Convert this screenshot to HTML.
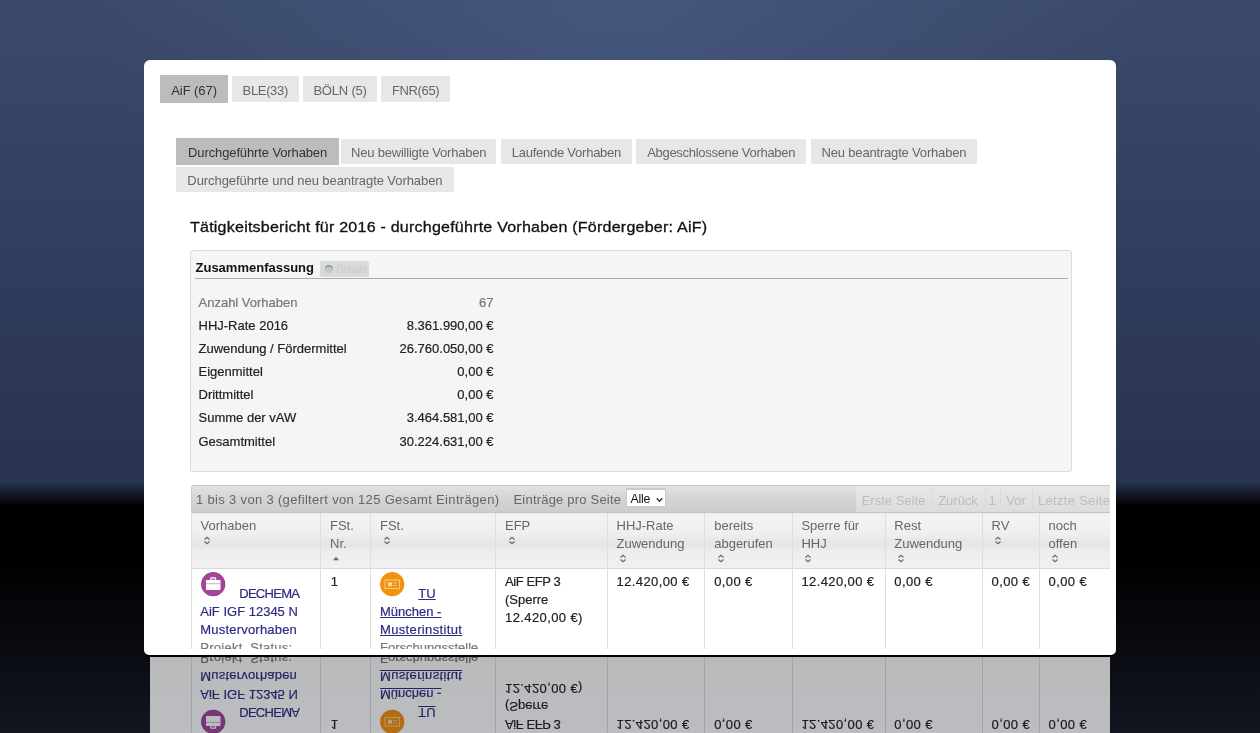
<!DOCTYPE html>
<html><head><meta charset="utf-8"><title>Tätigkeitsbericht</title>
<style>
*{box-sizing:border-box;margin:0;padding:0}
html,body{width:1260px;height:733px;overflow:hidden}
body{position:relative;font-family:"Liberation Sans",sans-serif;font-size:13px;color:#222;background:#000}
.bgtop{position:absolute;left:0;top:0;width:1260px;height:506px;
 background:linear-gradient(to bottom,#3b4a6c 0px,#2f3b5a 300px,#283350 482px,#000 506px)}
.bgglow{position:absolute;left:0;top:0;width:1260px;height:482px;
 background:radial-gradient(ellipse 520px 300px at 620px 10px,rgba(78,98,138,0.55),rgba(78,98,138,0) 100%)}
.bgbot{position:absolute;left:0;top:506px;width:1260px;height:227px;
 background:linear-gradient(to bottom,#000 0px,#010102 60px,#121620 227px)}
.card{position:absolute;left:144px;top:60px;width:972px;height:595px;background:#fff;border-radius:6px 6px 5px 5px;box-shadow:0 2px 0 #000}
.inner{position:absolute;left:150px;top:66px;width:960px;height:583px;overflow:hidden;background:#fff;will-change:transform}
.a{position:absolute;white-space:nowrap}
.tab{position:absolute;height:26px;background:#e7e7e7;color:#666;text-align:center;line-height:26px;padding-top:2px}
.tab.act{background:#bcbcbc;color:#333}
.title{position:absolute;left:39.5px;top:150.7px;font-size:15px;letter-spacing:0.2px;color:#111;line-height:20px;-webkit-text-stroke:0.3px #111;transform:scaleX(1.07);transform-origin:0 0}
.sum{position:absolute;left:39.5px;top:184px;width:882px;height:221.5px;background:#f5f5f5;border:1px solid #dcdcdc;border-radius:3px}
.sumhd{position:absolute;left:5px;top:9px;font-weight:bold;color:#111;line-height:16px}
.det{position:absolute;left:129.5px;top:9.6px;width:48.5px;height:16.7px;background:linear-gradient(#d9dcdc,#d6d9d8);border-radius:2px;color:#c9cccb;font-size:10px;line-height:17px;padding-left:16px}
.det:before{content:"";position:absolute;left:5px;top:4.5px;width:8px;height:8px;border-radius:4px;background:#c4c8c8;box-shadow:inset 0 2px 0 #9a9d9d}
.sumline{position:absolute;left:4px;top:26.5px;width:873px;height:1px;background:#acacac}
.row{position:absolute;left:8px;width:295px;line-height:18px;-webkit-text-stroke:0.2px currentColor}
.row .v{position:absolute;right:0;top:0}
.tb{position:absolute;left:41px;top:419px;width:930px;height:28px;border:1px solid #cacaca;border-bottom-color:#c2c2c2;border-radius:3px 3px 0 0;background:linear-gradient(#e3e3e3,#d6d6d6 40%,#cdcdcd);color:#666}
.hd{position:absolute;left:41px;top:446.5px;width:930px;height:56px;background:linear-gradient(#eeeeee 0,#f3f3f3 11%,#eeeeee 40%,#e7e7e7 50%,#e7e7e7 60%,#eeeeee 70%,#f0f0f0 100%);border-bottom:1px solid #dadada}
.col{position:absolute;top:0;height:100%;width:1px;background:#dedede}
.ht{position:absolute;color:#666;line-height:18px}
.bd{position:absolute;left:41px;top:502px;width:930px;height:90px}
.bt{position:absolute;line-height:17.9px;-webkit-text-stroke:0.2px currentColor}
.lnk{color:#2c2c82}
.u{text-decoration:underline}
.g{color:#777}
.sort{position:absolute;width:8px;height:9px}
.refl{position:absolute;left:150px;top:657px;width:960px;height:81px;overflow:hidden;transform:scaleY(-1);opacity:0.72;background:#fff;will-change:transform}
.sel{background:#fff;border:1px solid #c9c9c9;border-radius:1px;color:#111;line-height:16px;padding-left:3px;font-size:12.5px}
.pg{position:absolute;top:1.5px;height:23.5px;color:#bdbdbd;text-align:center;line-height:22px;padding-top:2px}
.pgw{position:absolute;left:664px;top:1px;width:280px;height:25px;background:linear-gradient(#e6e6e6,#dcdcdc)}
.sep{position:absolute;top:2px;width:1px;height:22px;background:#dadada}
</style></head><body>
<div class="bgtop"></div><div class="bgglow"></div><div class="bgbot"></div>
<div class="card"></div>
<div class="inner">
 <div class="tab act" style="left:10px;top:9.3px;width:68.2px;height:27.8px;line-height:28px;letter-spacing:-0.05px">AiF (67)</div>
 <div class="tab" style="left:81.7px;top:10.3px;width:67.1px;height:25.6px;letter-spacing:-0.34px">BLE(33)</div>
 <div class="tab" style="left:153.3px;top:10.3px;width:73.5px;height:25.6px;letter-spacing:-0.2px">BÖLN (5)</div>
 <div class="tab" style="left:231.2px;top:10.3px;width:68.9px;height:25.6px;letter-spacing:-0.35px">FNR(65)</div>
 <div class="tab act" style="left:26.2px;top:72.1px;height:26.8px;width:162.8px;letter-spacing:-0.12px">Durchgeführte Vorhaben</div>
 <div class="tab" style="left:191.4px;top:73.1px;height:24.8px;padding-top:1.2px;width:154.6px;letter-spacing:-0.22px">Neu bewilligte Vorhaben</div>
 <div class="tab" style="left:351.1px;top:73.1px;height:24.8px;padding-top:1.2px;width:130.6px;letter-spacing:-0.24px">Laufende Vorhaben</div>
 <div class="tab" style="left:486px;top:73.1px;height:24.8px;padding-top:1.2px;width:170.3px;letter-spacing:-0.29px">Abgeschlossene Vorhaben</div>
 <div class="tab" style="left:660.6px;top:73.1px;height:24.8px;padding-top:1.2px;width:166.7px;letter-spacing:-0.18px">Neu beantragte Vorhaben</div>
 <div class="tab" style="left:26px;top:100.8px;height:25.3px;padding-top:1.4px;width:277.8px;letter-spacing:-0.07px">Durchgeführte und neu beantragte Vorhaben</div>

 <div class="title">Tätigkeitsbericht für 2016 - durchgeführte Vorhaben (Fördergeber: AiF)</div>

 <div class="sum">
  <div class="sumhd">Zusammenfassung</div>
  <div class="det">Details</div>
  <div class="sumline"></div>
  <div class="row g" style="top:42.5px">Anzahl Vorhaben<span class="v">67</span></div>
  <div class="row" style="top:65.7px">HHJ-Rate 2016<span class="v">8.361.990,00 €</span></div>
  <div class="row" style="top:88.9px">Zuwendung / Fördermittel<span class="v">26.760.050,00 €</span></div>
  <div class="row" style="top:112px">Eigenmittel<span class="v">0,00 €</span></div>
  <div class="row" style="top:135.2px">Drittmittel<span class="v">0,00 €</span></div>
  <div class="row" style="top:158.4px">Summe der vAW<span class="v">3.464.581,00 €</span></div>
  <div class="row" style="top:181.6px">Gesamtmittel<span class="v">30.224.631,00 €</span></div>
 </div>

 <div class="tb"><span class="a" style="left:4px;top:5px;line-height:18px;letter-spacing:0.33px">1 bis 3 von 3 (gefiltert von 125 Gesamt Einträgen)</span><span class="a" style="left:321.5px;top:5px;line-height:18px;letter-spacing:0.2px">Einträge pro Seite</span><div class="a sel" style="left:433.5px;top:2.2px;width:40.5px;height:19.2px;line-height:19px;border-top-width:2px;font-size:12.3px;letter-spacing:-0.2px;padding-left:4px">Alle<svg style="position:absolute;left:29px;top:7px" width="7" height="6" viewBox="0 0 7 6"><path d="M0.7 1.2 L3.5 4.2 L6.3 1.2" fill="none" stroke="#333" stroke-width="1.3"/></svg></div><div class="pgw"></div><div class="pg" style="left:664px;width:75px"><span>Erste Seite</span></div><div class="sep" style="left:739px"></div><div class="pg" style="left:739px;width:54px"><span>Zurück</span></div><div class="sep" style="left:793px"></div><div class="pg" style="left:793px;width:14px"><span>1</span></div><div class="sep" style="left:808px"></div><div class="pg" style="left:808px;width:32px"><span>Vor</span></div><div class="sep" style="left:840px"></div><div class="pg" style="left:842px;width:90px;text-align:left;padding-left:4px;letter-spacing:0.3px"><span>Letzte Seite</span></div></div>
 <div class="hd"><div class="col" style="left:0px"></div><div class="col" style="left:129px"></div><div class="col" style="left:179px"></div><div class="col" style="left:304px"></div><div class="col" style="left:416px"></div><div class="col" style="left:513px"></div><div class="col" style="left:601px"></div><div class="col" style="left:694px"></div><div class="col" style="left:791px"></div><div class="col" style="left:848px"></div><div class="ht" style="left:9.5px;top:4.50px">Vorhaben</div><svg class="sort" style="left:12.4px;top:23.5px" width="8" height="9" viewBox="0 0 8 9"><path d="M1.5 3.5 L4 1.2 L6.5 3.5 M1.5 5.5 L4 7.8 L6.5 5.5" fill="none" stroke="#6a6a6a" stroke-width="1.2"/></svg><div class="ht" style="left:139.0px;top:4.50px">FSt.<br>Nr.</div><svg class="sort" style="left:140.8px;top:41.3px" width="8" height="9" viewBox="0 0 8 9"><path d="M1 6.2 L4 2.8 L7 6.2 Z" fill="#666"/></svg><div class="ht" style="left:189.0px;top:4.50px">FSt.</div><svg class="sort" style="left:191.9px;top:23.5px" width="8" height="9" viewBox="0 0 8 9"><path d="M1.5 3.5 L4 1.2 L6.5 3.5 M1.5 5.5 L4 7.8 L6.5 5.5" fill="none" stroke="#6a6a6a" stroke-width="1.2"/></svg><div class="ht" style="left:314.0px;top:4.50px">EFP</div><svg class="sort" style="left:316.9px;top:23.5px" width="8" height="9" viewBox="0 0 8 9"><path d="M1.5 3.5 L4 1.2 L6.5 3.5 M1.5 5.5 L4 7.8 L6.5 5.5" fill="none" stroke="#6a6a6a" stroke-width="1.2"/></svg><div class="ht" style="left:425.5px;top:4.50px">HHJ-Rate<br>Zuwendung</div><svg class="sort" style="left:428.4px;top:41.5px" width="8" height="9" viewBox="0 0 8 9"><path d="M1.5 3.5 L4 1.2 L6.5 3.5 M1.5 5.5 L4 7.8 L6.5 5.5" fill="none" stroke="#6a6a6a" stroke-width="1.2"/></svg><div class="ht" style="left:523.2px;top:4.50px">bereits<br>abgerufen</div><svg class="sort" style="left:526.1px;top:41.5px" width="8" height="9" viewBox="0 0 8 9"><path d="M1.5 3.5 L4 1.2 L6.5 3.5 M1.5 5.5 L4 7.8 L6.5 5.5" fill="none" stroke="#6a6a6a" stroke-width="1.2"/></svg><div class="ht" style="left:610.4px;top:4.50px">Sperre für<br>HHJ</div><svg class="sort" style="left:613.3px;top:41.5px" width="8" height="9" viewBox="0 0 8 9"><path d="M1.5 3.5 L4 1.2 L6.5 3.5 M1.5 5.5 L4 7.8 L6.5 5.5" fill="none" stroke="#6a6a6a" stroke-width="1.2"/></svg><div class="ht" style="left:703.3px;top:4.50px">Rest<br>Zuwendung</div><svg class="sort" style="left:706.2px;top:41.5px" width="8" height="9" viewBox="0 0 8 9"><path d="M1.5 3.5 L4 1.2 L6.5 3.5 M1.5 5.5 L4 7.8 L6.5 5.5" fill="none" stroke="#6a6a6a" stroke-width="1.2"/></svg><div class="ht" style="left:800.5px;top:4.50px">RV</div><svg class="sort" style="left:803.4px;top:23.5px" width="8" height="9" viewBox="0 0 8 9"><path d="M1.5 3.5 L4 1.2 L6.5 3.5 M1.5 5.5 L4 7.8 L6.5 5.5" fill="none" stroke="#6a6a6a" stroke-width="1.2"/></svg><div class="ht" style="left:857.5px;top:4.50px">noch<br>offen</div><svg class="sort" style="left:860.4px;top:41.5px" width="8" height="9" viewBox="0 0 8 9"><path d="M1.5 3.5 L4 1.2 L6.5 3.5 M1.5 5.5 L4 7.8 L6.5 5.5" fill="none" stroke="#6a6a6a" stroke-width="1.2"/></svg></div>
 <div class="bd"><div class="col" style="left:0px"></div><div class="col" style="left:129px"></div><div class="col" style="left:179px"></div><div class="col" style="left:304px"></div><div class="col" style="left:416px"></div><div class="col" style="left:513px"></div><div class="col" style="left:601px"></div><div class="col" style="left:694px"></div><div class="col" style="left:791px"></div><div class="col" style="left:848px"></div><svg class="a" style="left:9.6px;top:4.2px" width="25" height="25" viewBox="0 0 25 25"><circle cx="12.2" cy="12.2" r="12.1" fill="#9c3f95"/><circle cx="12.2" cy="12.2" r="11.2" fill="#a2469b"/><rect x="5" y="7.9" width="14.5" height="10.2" rx="0.8" fill="#fff"/><rect x="9.7" y="5.9" width="5" height="2.3" rx="0.8" fill="none" stroke="#fff" stroke-width="1.1"/><line x1="5" y1="11.7" x2="19.5" y2="11.7" stroke="#c9a6c6" stroke-width="0.9"/></svg><div class="a bt lnk" style="left:48.20px;top:17.24px;letter-spacing:-0.7px">DECHEMA</div><div class="a bt lnk" style="left:9.30px;top:34.94px;">AiF IGF 12345 N</div><div class="a bt lnk" style="left:9.30px;top:52.64px;letter-spacing:0.2px">Mustervorhaben</div><div class="a bt g" style="left:9.30px;top:70.54px;letter-spacing:0.25px">Projekt&nbsp; Status:</div><div class="a bt " style="left:139.70px;top:5.44px;">1</div><svg class="a" style="left:189.1px;top:4.2px" width="25" height="25" viewBox="0 0 25 25"><circle cx="12.2" cy="12.2" r="12.1" fill="#f39112"/><rect x="5" y="8" width="14.5" height="8.5" fill="none" stroke="#fbc77a" stroke-width="1.1"/><rect x="8" y="10.3" width="4" height="4" fill="#fdd9a0"/><line x1="13" y1="11" x2="17" y2="11" stroke="#fbc77a" stroke-width="0.9"/><line x1="13" y1="13.5" x2="17" y2="13.5" stroke="#fbc77a" stroke-width="0.9"/></svg><div class="a bt lnk u" style="left:227.30px;top:16.74px;">TU</div><div class="a bt lnk u" style="left:189.00px;top:34.94px;">München -</div><div class="a bt lnk u" style="left:189.00px;top:52.64px;letter-spacing:0.35px">Musterinstitut</div><div class="a bt g" style="left:189.00px;top:70.54px;">Forschungsstelle</div><div class="a bt " style="left:314.00px;top:5.04px;letter-spacing:-0.4px">AiF EFP 3</div><div class="a bt " style="left:314.00px;top:22.94px;">(Sperre</div><div class="a bt " style="left:314.00px;top:40.84px;letter-spacing:0.4px">12.420,00 €)</div><div class="a bt " style="left:425.50px;top:5.04px;letter-spacing:0.4px">12.420,00 €</div><div class="a bt " style="left:523.20px;top:5.04px;letter-spacing:0.4px">0,00 €</div><div class="a bt " style="left:610.40px;top:5.04px;letter-spacing:0.4px">12.420,00 €</div><div class="a bt " style="left:703.30px;top:5.04px;letter-spacing:0.4px">0,00 €</div><div class="a bt " style="left:800.50px;top:5.04px;letter-spacing:0.4px">0,00 €</div><div class="a bt " style="left:857.50px;top:5.04px;letter-spacing:0.4px">0,00 €</div></div>
</div>
<div class="refl"><div class="bd" style="top:0px"><div class="col" style="left:0px"></div><div class="col" style="left:129px"></div><div class="col" style="left:179px"></div><div class="col" style="left:304px"></div><div class="col" style="left:416px"></div><div class="col" style="left:513px"></div><div class="col" style="left:601px"></div><div class="col" style="left:694px"></div><div class="col" style="left:791px"></div><div class="col" style="left:848px"></div><svg class="a" style="left:9.6px;top:4.2px" width="25" height="25" viewBox="0 0 25 25"><circle cx="12.2" cy="12.2" r="12.1" fill="#9c3f95"/><circle cx="12.2" cy="12.2" r="11.2" fill="#a2469b"/><rect x="5" y="7.9" width="14.5" height="10.2" rx="0.8" fill="#fff"/><rect x="9.7" y="5.9" width="5" height="2.3" rx="0.8" fill="none" stroke="#fff" stroke-width="1.1"/><line x1="5" y1="11.7" x2="19.5" y2="11.7" stroke="#c9a6c6" stroke-width="0.9"/></svg><div class="a bt lnk" style="left:48.20px;top:17.24px;letter-spacing:-0.7px">DECHEMA</div><div class="a bt lnk" style="left:9.30px;top:34.94px;">AiF IGF 12345 N</div><div class="a bt lnk" style="left:9.30px;top:52.64px;letter-spacing:0.2px">Mustervorhaben</div><div class="a bt g" style="left:9.30px;top:70.54px;letter-spacing:0.25px">Projekt&nbsp; Status:</div><div class="a bt " style="left:139.70px;top:5.44px;">1</div><svg class="a" style="left:189.1px;top:4.2px" width="25" height="25" viewBox="0 0 25 25"><circle cx="12.2" cy="12.2" r="12.1" fill="#f39112"/><rect x="5" y="8" width="14.5" height="8.5" fill="none" stroke="#fbc77a" stroke-width="1.1"/><rect x="8" y="10.3" width="4" height="4" fill="#fdd9a0"/><line x1="13" y1="11" x2="17" y2="11" stroke="#fbc77a" stroke-width="0.9"/><line x1="13" y1="13.5" x2="17" y2="13.5" stroke="#fbc77a" stroke-width="0.9"/></svg><div class="a bt lnk u" style="left:227.30px;top:16.74px;">TU</div><div class="a bt lnk u" style="left:189.00px;top:34.94px;">München -</div><div class="a bt lnk u" style="left:189.00px;top:52.64px;letter-spacing:0.35px">Musterinstitut</div><div class="a bt g" style="left:189.00px;top:70.54px;">Forschungsstelle</div><div class="a bt " style="left:314.00px;top:5.04px;letter-spacing:-0.4px">AiF EFP 3</div><div class="a bt " style="left:314.00px;top:22.94px;">(Sperre</div><div class="a bt " style="left:314.00px;top:40.84px;letter-spacing:0.4px">12.420,00 €)</div><div class="a bt " style="left:425.50px;top:5.04px;letter-spacing:0.4px">12.420,00 €</div><div class="a bt " style="left:523.20px;top:5.04px;letter-spacing:0.4px">0,00 €</div><div class="a bt " style="left:610.40px;top:5.04px;letter-spacing:0.4px">12.420,00 €</div><div class="a bt " style="left:703.30px;top:5.04px;letter-spacing:0.4px">0,00 €</div><div class="a bt " style="left:800.50px;top:5.04px;letter-spacing:0.4px">0,00 €</div><div class="a bt " style="left:857.50px;top:5.04px;letter-spacing:0.4px">0,00 €</div></div></div>
</body></html>
